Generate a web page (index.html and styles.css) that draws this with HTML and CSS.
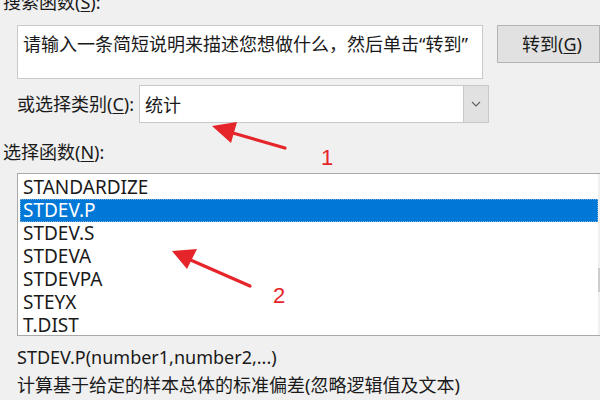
FILE: index.html
```html
<!DOCTYPE html>
<html lang="zh-CN">
<head>
<meta charset="utf-8">
<title>插入函数</title>
<link rel="stylesheet" href="styles.css">
</head>
<body>
<div class="dialog">
  <div class="label top-label">搜索函数(<u>S</u>):</div>
  <div class="search-row">
    <div class="search-box">请输入一条简短说明来描述您想做什么，然后单击“转到”</div>
    <div class="btn">转到(<u>G</u>)</div>
  </div>
  <div class="cat-row">
    <div class="label cat-label">或选择类别(<u>C</u>):</div>
    <div class="select">
      <span class="select-text">统计</span>
      <span class="select-btn">
        <svg width="10" height="6" viewBox="0 0 10 6"><path d="M1 1 L5 5 L9 1" fill="none" stroke="#606060" stroke-width="1.1"/></svg>
      </span>
    </div>
  </div>
  <div class="label fn-label">选择函数(<u>N</u>):</div>
  <div class="list">
    <div class="items">
      <div class="item">STANDARDIZE</div>
      <div class="item selected">STDEV.P</div>
      <div class="item">STDEV.S</div>
      <div class="item">STDEVA</div>
      <div class="item">STDEVPA</div>
      <div class="item">STEYX</div>
      <div class="item">T.DIST</div>
    </div>
    <div class="scrollbar">
      <svg class="sb-up" width="10" height="6" viewBox="0 0 10 6"><path d="M1 5 L5 1 L9 5" fill="none" stroke="#606060" stroke-width="1.2"/></svg>
      <div class="sb-thumb"></div>
      <svg class="sb-down" width="10" height="6" viewBox="0 0 10 6"><path d="M1 1 L5 5 L9 1" fill="none" stroke="#606060" stroke-width="1.2"/></svg>
    </div>
  </div>
  <div class="sig">STDEV.P(number1,number2,...)</div>
  <div class="desc">计算基于给定的样本总体的标准偏差(忽略逻辑值及文本)</div>

  <svg class="annot" width="600" height="400" viewBox="0 0 600 400">
    <line x1="285" y1="148" x2="226" y2="131" stroke="#e5252a" stroke-width="3.2" stroke-linecap="round"/>
    <polygon points="212,126 237,122 231,143" fill="#e5252a"/>
    <text x="321" y="165" class="num">1</text>
    <line x1="250" y1="286" x2="186" y2="258" stroke="#e5252a" stroke-width="3.2" stroke-linecap="round"/>
    <polygon points="172,251 197,249 187,269" fill="#e5252a"/>
    <text x="273" y="303" class="num">2</text>
  </svg>
</div>
</body>
</html>
```
FILE: styles.css
```css
html, body {
  margin: 0;
  padding: 0;
  background: #f0f0f0;
}
.dialog {
  position: relative;
  width: 600px;
  height: 400px;
  overflow: hidden;
  font-family: "Noto Sans", "Noto Sans CJK SC", sans-serif;
  font-size: 18px;
  color: #1a1a1a;
}
.label {
  line-height: 20px;
  white-space: nowrap;
}
u {
  text-decoration-thickness: 1px;
  text-underline-offset: 2px;
}
.top-label {
  margin-top: -8px;
  margin-left: 3px;
}
.search-row {
  display: flex;
  margin-top: 13px;
  margin-left: 17px;
}
.search-box {
  box-sizing: border-box;
  width: 472px;
  height: 54px;
  background: #fff;
  border: 1px solid #c9c9c9;
  padding: 6px 0 0 5px;
  line-height: 24px;
  white-space: nowrap;
}
.btn {
  box-sizing: border-box;
  margin-left: 14px;
  width: 104px;
  height: 38px;
  background: #e1e1e1;
  border: 1px solid #b4b4b4;
  line-height: 36px;
  padding-left: 24px;
  white-space: nowrap;
}
.cat-row {
  display: flex;
  align-items: center;
  margin-top: 6px;
  margin-left: 17px;
}
.cat-label {
  width: 122px;
}
.select {
  box-sizing: border-box;
  width: 350px;
  height: 38px;
  background: #fff;
  border: 1px solid #c9c9c9;
  display: flex;
  align-items: center;
  justify-content: space-between;
}
.select-text {
  padding-left: 5px;
}
.select-btn {
  box-sizing: border-box;
  width: 25px;
  height: 36px;
  background: #e1e1e1;
  border-left: 1px solid #c9c9c9;
  display: flex;
  align-items: center;
  justify-content: center;
}
.fn-label {
  margin-top: 19px;
  margin-left: 3px;
}
.list {
  box-sizing: border-box;
  margin-top: 11px;
  margin-left: 17px;
  width: 600px;
  height: 163px;
  background: #fff;
  border: 1px solid #a9a9a9;
  display: flex;
}
.items {
  flex: 1;
  padding: 2px 0 0 2px;
}
.item {
  box-sizing: border-box;
  height: 23px;
  line-height: 23px;
  padding-left: 3px;
  font-size: 19px;
  white-space: nowrap;
}
.item.selected {
  background: #0078d7;
  color: #fff;
  outline: 1px dotted #7aa8d4;
  outline-offset: -1px;
}
.scrollbar {
  width: 17px;
  margin-right: 1px;
  background: #f0f0f0;
  display: flex;
  flex-direction: column;
  align-items: center;
}
.sb-up {
  margin-top: 12px;
}
.sb-thumb {
  width: 17px;
  height: 24px;
  background: #cdcdcd;
  margin-top: 76px;
}
.sb-down {
  margin-top: 23px;
}
.sig, .desc {
  line-height: 28px;
  margin-left: 17px;
  white-space: nowrap;
}
.sig {
  margin-top: 7px;
}
.annot {
  position: absolute;
  left: 0;
  top: 0;
  pointer-events: none;
}
.num {
  font-family: "Liberation Sans", sans-serif;
  font-size: 22px;
  fill: #e5252a;
}
```
